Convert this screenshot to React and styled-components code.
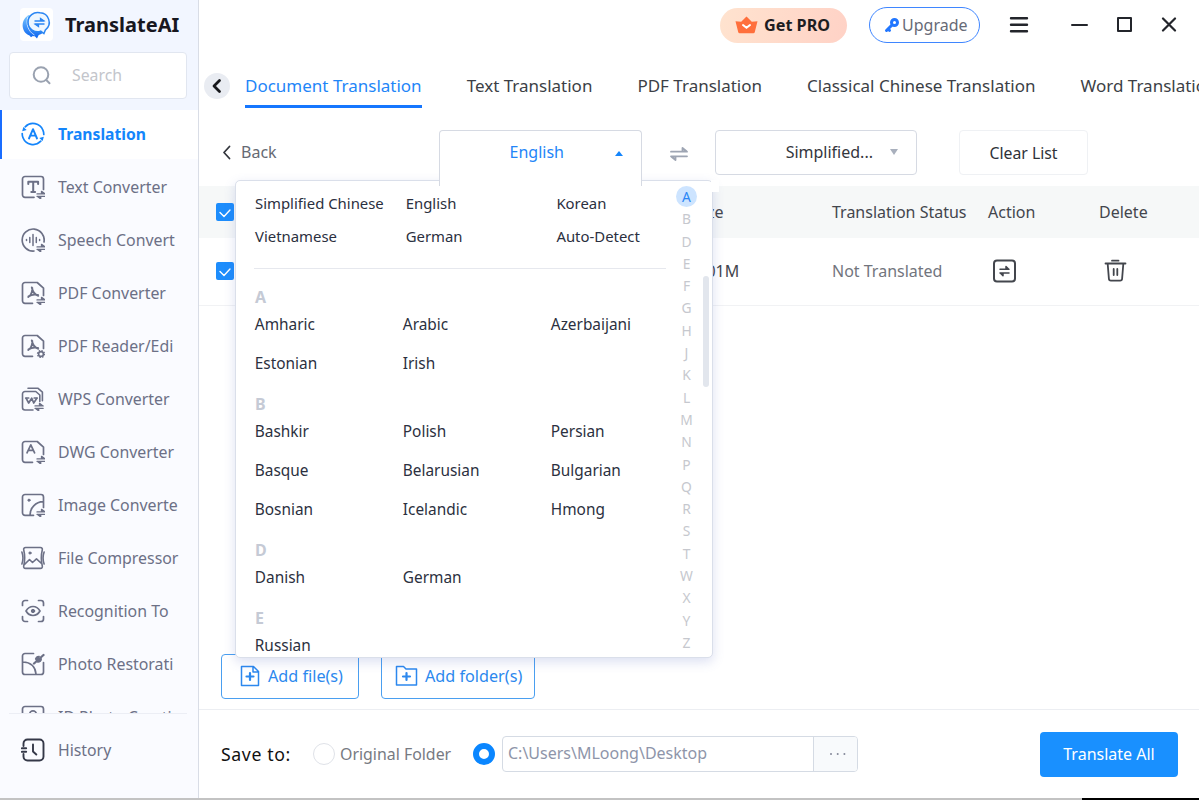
import styled, { createGlobalStyle } from "styled-components";

const GlobalStyle = createGlobalStyle`
  * {
    box-sizing: border-box;
  }

  body {
    margin: 0;
    overflow: hidden;
    background-color: #fff;
    color: #333;
    font-family: "Noto Sans", "Open Sans", sans-serif;
    font-size: 16px;
  }

  button {
    font: inherit;
    padding: 0;
    border: none;
    background: none;
    white-space: nowrap;
  }

  svg {
    display: block;
    flex: none;
  }
`;

const StyledWindow = styled.div`
  display: flex;
  flex-direction: column;
  width: 1199px;
  height: 800px;
  overflow: hidden;
`;

const StyledBody = styled.div`
  display: flex;
  height: 798px;
`;

const StyledBottomEdge = styled.div`
  display: flex;
  justify-content: flex-end;
  height: 2px;
  background-color: #c3c3c3;
`;

const StyledBottomMark = styled.div`
  width: 117px;
  background-color: #000;
`;

/* Sidebar */

const StyledSidebar = styled.aside`
  display: flex;
  flex-direction: column;
  width: 199px;
  flex: none;
  background-color: #fafbff;
  border-right: 1px solid #d9dde6;
`;

const StyledSidebarTop = styled.div`
  height: 110px;
  padding: 8px 10px 0 9px;
  background-color: #f2f6ff;
`;

const StyledBrand = styled.div`
  display: flex;
  align-items: center;
  gap: 12px;
  height: 33px;
  padding-left: 11px;
  color: #17171f;
  font-size: 20px;
  font-weight: 700;
`;

const StyledSearch = styled.label`
  display: flex;
  align-items: center;
  gap: 21px;
  width: 178px;
  height: 47px;
  margin-top: 11px;
  padding: 0 0 2px 22px;
  border: 1px solid #e1e6f0;
  border-radius: 4px;
  background-color: #fff;
  color: #c3c5cb;
  font-size: 15.8px;
`;

const StyledNav = styled.ul`
  height: 603px;
  margin: 0;
  padding: 0;
  overflow: hidden;
  list-style: none;
`;

const StyledNavItem = styled.li`
  display: flex;
  align-items: center;
  gap: 13px;
  height: ${({ $isActive }) => ($isActive ? "49px" : "53.05px")};
  margin-bottom: ${({ $isActive }) => ($isActive ? "2px" : "0")};
  padding-bottom: 1px;
  padding-left: ${({ $isActive }) => ($isActive ? "19px" : "21px")};
  border-left: ${({ $isActive }) => ($isActive ? "2px solid #1a6dff" : "none")};
  background-color: ${({ $isActive }) => ($isActive ? "#fff" : "transparent")};
  color: ${({ $isActive }) => ($isActive ? "#1485fb" : "#6c7086")};
  font-size: ${({ $isActive }) => ($isActive ? "15.7px" : "15.9px")};
  font-weight: ${({ $isActive }) => ($isActive ? 700 : 400)};
  white-space: nowrap;
`;

const StyledHistory = styled.div`
  display: flex;
  align-items: center;
  gap: 13px;
  height: 72px;
  margin: 0 11px 0 9px;
  padding-left: 12px;
  border-top: 1px solid #eceef5;
  color: #6c7086;
  font-size: 15.8px;

  svg {
    color: #343848;
  }
`;

/* Main */

const StyledMain = styled.main`
  display: flex;
  flex-direction: column;
  width: 1000px;
  overflow: hidden;
`;

const StyledTitleBar = styled.header`
  display: flex;
  align-items: center;
  justify-content: flex-end;
  height: 51px;
  padding: 0 22px 1px 0;
  color: #23252b;
`;

const StyledGetPro = styled.button`
  display: flex;
  align-items: center;
  gap: 6px;
  width: 127px;
  height: 35px;
  padding-left: 15px;
  border-radius: 18px;
  background: linear-gradient(100deg, #ffe3cf, #ffd2c6);
  color: #1d1d22;
  font-size: 16.2px;
  font-weight: 700;
`;

const StyledUpgrade = styled.button`
  display: flex;
  align-items: center;
  gap: 2px;
  width: 111px;
  height: 36px;
  margin: 0 29px 0 22px;
  padding-left: 14px;
  border: 1px solid #3f86ff;
  border-radius: 18px;
  background-color: #fff;
  color: #666a76;
  font-size: 16px;
`;

const StyledWindowButtons = styled.div`
  display: flex;
  align-items: center;
  gap: 28px;
  margin-left: 42px;
`;

const StyledTabs = styled.nav`
  display: flex;
  align-items: center;
  height: 72px;
  padding: 0 0 3px 5px;
`;

const StyledTabsBack = styled.button`
  display: grid;
  place-items: center;
  flex: none;
  width: 26px;
  height: 26px;
  margin-right: 15px;
  border-radius: 50%;
  background-color: #e9ecf2;
  color: #17181c;
`;

const StyledTab = styled.a`
  flex: none;
  height: 44px;
  margin-right: 45px;
  padding-top: 2px;
  border-bottom: 3px solid
    ${({ $isActive }) => ($isActive ? "#1677ff" : "transparent")};
  color: ${({ $isActive }) => ($isActive ? "#1f86f8" : "#3c3f46")};
  font-size: 17px;
  line-height: 40px;
  white-space: nowrap;
`;

const StyledToolbar = styled.div`
  position: relative;
  display: flex;
  align-items: flex-start;
  height: 63px;
  padding: 7px 0 0 23px;
`;

const StyledBack = styled.button`
  display: flex;
  align-items: center;
  gap: 10px;
  width: 217px;
  height: 44px;
  color: #666a73;
`;

const StyledSelect = styled.button`
  position: relative;
  display: flex;
  align-items: center;
  justify-content: flex-end;
  gap: ${({ $isOpen }) => ($isOpen ? "51px" : "17px")};
  width: ${({ $isOpen }) => ($isOpen ? "203px" : "202px")};
  height: ${({ $isOpen }) => ($isOpen ? "56px" : "45px")};
  padding: ${({ $isOpen }) => ($isOpen ? "0 18px 13px 0" : "0 18px 2px 0")};
  border: 1px solid #d6dae3;
  border-bottom: ${({ $isOpen }) => ($isOpen ? "none" : "1px solid #d6dae3")};
  border-radius: ${({ $isOpen }) => ($isOpen ? "4px 4px 0 0" : "4px")};
  background-color: #fff;
  color: ${({ $isOpen }) => ($isOpen ? "#2385f8" : "#33363d")};
  z-index: ${({ $isOpen }) => ($isOpen ? 3 : 0)};
`;

const StyledCaret = styled.span`
  margin-top: ${({ $isUp }) => ($isUp ? "2px" : "1px")};
  border: 4px solid transparent;
  border-top-width: ${({ $isUp }) => ($isUp ? "0" : "6px")};
  border-bottom-width: ${({ $isUp }) => ($isUp ? "5px" : "0")};
  border-top-color: #a9b0bd;
  border-bottom-color: #1485fb;
`;

const StyledSwap = styled.button`
  display: grid;
  place-items: center;
  width: 73px;
  height: 48px;
  color: #9ea5b3;
`;

const StyledClear = styled.button`
  width: 129px;
  height: 45px;
  margin-left: 42px;
  border: 1px solid #eff1f4;
  border-radius: 4px;
  color: #2e3138;
  font-size: 15.8px;
`;

const StyledTableRow = styled.div`
  display: grid;
  grid-template-columns: 477px 139px 156px 111px 1fr;
  align-items: center;
  height: ${({ $isHead }) => ($isHead ? "52px" : "68px")};
  padding: ${({ $isHead }) => ($isHead ? "0 0 0 17px" : "0 0 1px 17px")};
  border-bottom: ${({ $isHead }) => ($isHead ? "none" : "1px solid #f1f2f4")};
  background-color: ${({ $isHead }) => ($isHead ? "#f6f8f8" : "#fff")};
  color: #43464d;
  font-size: 16px;
  white-space: nowrap;
`;

const StyledSizeHead = styled.span`
  padding-left: 1px;
`;

const StyledStatus = styled.span`
  color: #72757d;
`;

const StyledCheckbox = styled.span`
  display: grid;
  place-items: center;
  width: 18px;
  height: 18px;
  border-radius: 2px;
  background-color: #1d8dfc;
  color: #fff;
`;

const StyledAddButtons = styled.div`
  display: flex;
  gap: 22px;
  margin-top: auto;
  padding: 0 0 10px 22px;
  border-bottom: 1px solid #eceef2;
`;

const StyledAddButton = styled.button`
  display: flex;
  align-items: center;
  gap: ${({ $gap }) => $gap};
  width: ${({ $width }) => $width};
  height: 45px;
  padding: 0 0 1px ${({ $inset }) => $inset};
  border: 1px solid #4a9ff0;
  border-radius: 4px;
  color: #2c88ee;
  font-size: 16.2px;
`;

const StyledFooter = styled.footer`
  display: flex;
  align-items: center;
  height: 88px;
  padding: 0 21px 0 22px;
`;

const StyledSaveTo = styled.span`
  width: 92px;
  flex: none;
  color: #111;
  font-size: 17.7px;
  letter-spacing: 0.6px;
`;

const StyledRadio = styled.span`
  width: 22px;
  height: 22px;
  flex: none;
  border: ${({ $isChecked }) =>
    $isChecked ? "6.5px solid #0a86ff" : "1.5px solid #dfe2e8"};
  border-radius: 50%;
  background-color: #fff;
`;

const StyledRadioText = styled.span`
  width: 138px;
  flex: none;
  padding-left: 5px;
  color: #777a82;
  font-size: 15.9px;
  white-space: nowrap;
`;

const StyledPath = styled.div`
  display: flex;
  width: 356px;
  height: 36px;
  flex: none;
  margin-left: 7px;
  border: 1px solid #d5dbe4;
  border-radius: 4px;
  overflow: hidden;
`;

const StyledPathText = styled.span`
  width: 310px;
  padding-left: 5px;
  color: #8e95a9;
  line-height: 32px;
  font-size: 16px;
`;

const StyledBrowse = styled.button`
  flex: 1;
  display: grid;
  place-items: center;
  padding-left: 5px;
  border-left: 1px solid #d5dbe4;
  background-color: #f8fafc;
  color: #85899a;
`;

const StyledTranslateAll = styled.button`
  width: 138px;
  height: 45px;
  margin-left: auto;
  border-radius: 4px;
  background-color: #1990ff;
  color: #fff;
  font-size: 16px;
`;

/* Language menu */

const StyledMenu = styled.div`
  position: absolute;
  top: 57px;
  left: 36px;
  z-index: 2;
  display: flex;
  width: 478px;
  height: 478px;
  border: 1px solid #dadfea;
  border-radius: 5px;
  background-color: #fff;
  box-shadow: 0 4px 12px rgba(80, 100, 190, 0.2);
`;

/* covers the corner where the menu meets the toolbar */
const StyledMenuCorner = styled.span`
  position: absolute;
  top: -1px;
  right: -7px;
  width: 8px;
  height: 12px;
  background-color: #fff;
`;

const StyledLanguages = styled.div`
  width: 440px;
  height: 476px;
  padding: 6px 10px 0 18px;
  overflow: hidden;
  color: #2b3040;
  font-size: 15.4px;
`;

const StyledRecent = styled.div`
  display: grid;
  grid-template-columns: repeat(3, 150.7px);
  grid-auto-rows: 32.5px;
  align-items: center;
  height: 82px;
  padding-left: 1px;
  border-bottom: 1px solid #e6e8ee;
  font-size: 14.9px;
  white-space: nowrap;
`;

const StyledLetter = styled.h3`
  height: 15px;
  margin: 14px 0 0;
  padding-left: 1px;
  color: #c5cad5;
  font-size: 16px;
  font-weight: 700;
  line-height: 15px;

  &:first-child {
    margin-top: 21px;
  }
`;

const StyledGroup = styled.div`
  display: grid;
  grid-template-columns: repeat(3, 148px);
  grid-auto-rows: 39px;
  align-items: center;
  padding-left: 0.8px;
`;

const StyledIndex = styled.ol`
  width: 21px;
  margin: 0;
  padding: 5px 0 0;
  list-style: none;
  color: #c6c8ce;
  font-size: 13.8px;
  line-height: 21px;
  text-align: center;
`;

const StyledIndexItem = styled.li`
  height: 21px;
  margin-bottom: 1.3px;
  border-radius: 50%;
  background-color: ${({ $isActive }) =>
    $isActive ? "#cde4ff" : "transparent"};
  color: ${({ $isActive }) => ($isActive ? "#2b86f5" : "inherit")};
`;

const StyledScrollThumb = styled.span`
  width: 6px;
  height: 111px;
  margin: 95px 0 0 6px;
  border-radius: 3px;
  background-color: #e2e6ed;
`;

/* Icons */

function Icon({ children, size = 24, width = size, height = size, box, sw = 1.7 }) {
  return (
    <svg
      width={width}
      height={height}
      viewBox={box || `0 0 ${width} ${height}`}
      fill="none"
      stroke="currentColor"
      strokeWidth={sw}
      strokeLinecap="round"
      strokeLinejoin="round"
    >
      {children}
    </svg>
  );
}

const miniSwap = (
  <path
    d="M16 18.900h8.200M20.500 18.500v-2.200l3.200 2.400zM24.200 21.300h-8.200M19.700 21.700v2.200l-3.200-2.400z"
    strokeWidth="1.300"
    fill="currentColor"
  />
);

const cutPage =
  "M11.500 22.300H4a2.500 2.500 0 0 1-2.500-2.500V4A2.500 2.500 0 0 1 4 1.500h12.200l6.300 5.600v7.400";

const pdfMark = (
  <path
    d="M10.800 6.500c.8 4 3 7.300 6.500 8.300M11.300 7c0 3.500-1.500 7.500-4 9M7.500 15.300c3-1.700 6-2 9.500-1.300"
    strokeWidth="1.900"
  />
);

const icons = {
  translation: (
    <Icon sw={1.7}>
      <path d="M4.200 4.800A10.800 10.800 0 0 1 22 8.300M19.800 19.200A10.800 10.800 0 0 1 2 15.700M1.200 11.500c0 1.500.2 2.900.8 4.200M22.800 12.500c0-1.500-.2-2.900-.8-4.200" />
      <path
        d="M1.200 9.300l4.500-1.200-3.400-3zM22.800 14.700l-4.500 1.200 3.400 3z"
        fill="currentColor"
        stroke="none"
      />
      <path d="M8 16.500l4-9.300 4 9.300M9.300 13.600h5.400" strokeWidth="1.900" />
    </Icon>
  ),
  text: (
    <Icon>
      <path d="M13 22.300H4a2.500 2.500 0 0 1-2.500-2.500V4A2.500 2.500 0 0 1 4 1.500h16A2.500 2.500 0 0 1 22.500 4v10.500" />
      <path d="M7.300 9V6.800h9.800V9M12.200 7v9.800M10.300 17h3.800" strokeWidth="2" />
      {miniSwap}
    </Icon>
  ),
  speech: (
    <Icon>
      <path d="M13 23A11 11 0 1 1 23 14" />
      <path
        d="M5.500 11.600v.8M8.800 9.500v5M12 6.500v11M15.300 9.500v5M18.600 11.600v.8"
        strokeWidth="1.500"
      />
      {miniSwap}
    </Icon>
  ),
  pdf: (
    <Icon>
      <path d={cutPage} />
      {pdfMark}
      {miniSwap}
    </Icon>
  ),
  reader: (
    <Icon>
      <path d={cutPage} />
      {pdfMark}
      <circle cx="20" cy="20" r="2.400" strokeWidth="1.600" />
      <circle
        cx="20"
        cy="20"
        r="3.500"
        strokeWidth="1.300"
        strokeLinecap="butt"
        strokeDasharray="1.400 1.350"
      />
    </Icon>
  ),
  wps: (
    <Icon sw={1.6}>
      <path d="M12 23H4a2.500 2.500 0 0 1-2.500-2.500V7A2.500 2.500 0 0 1 4 4.500h10.800l4 3.500v6.500" />
      <path d="M7 1.200h9.800l4.600 3.900v8.700" />
      <path
        d="M5 11l2.700 5 3-4.800 2 4.800L16 11M4.700 11h3M13.200 11h3"
        strokeWidth="1.700"
      />
      <g transform="translate(-2 0)">{miniSwap}</g>
    </Icon>
  ),
  dwg: (
    <Icon>
      <path d={cutPage} />
      <path d="M6 12.800l3.800-8 3.800 8M7.300 10.300h5" />
      {miniSwap}
    </Icon>
  ),
  image: (
    <Icon>
      <path d="M12.500 22.300H4a2.500 2.500 0 0 1-2.500-2.500V4A2.500 2.500 0 0 1 4 1.500h16A2.500 2.500 0 0 1 22.500 4v10.500M9 22c0-7 5.500-13 13.300-13.300" />
      <circle cx="8" cy="7.200" r="1.100" fill="currentColor" strokeWidth="1" />
      {miniSwap}
    </Icon>
  ),
  compress: (
    <Icon sw={1.6}>
      <path d="M4.600 1.500h14.800c1.500 0 2.200 1 1.900 2.300-1.300 5.400-1.300 10.800 0 16.200.3 1.500-.4 2.400-1.900 2.400H4.600c-1.500 0-2.200-.9-1.900-2.400 1.300-5.400 1.300-10.800 0-16.200-.3-1.300.4-2.300 1.900-2.300zM3.500 18.500l5-5 3 3 4-3.600 5 4.600" />
      <path d="M.9 6c1.300 3.700 1.300 8.300 0 12M23.100 6c-1.300 3.700-1.300 8.300 0 12" />
      <circle cx="9" cy="7" r="1.100" fill="currentColor" strokeWidth="1" />
    </Icon>
  ),
  recognition: (
    <Icon>
      <path d="M1.500 6.500V4A2.500 2.500 0 0 1 4 1.500h2.500M17.500 1.500H20A2.500 2.500 0 0 1 22.500 4v2.500M22.500 17.500V20a2.500 2.500 0 0 1-2.500 2.500h-2.500M6.500 22.500H4A2.500 2.500 0 0 1 1.500 20v-2.500" />
      <path d="M5 12c3.500-6 10.500-6 14 0-3.500 6-10.500 6-14 0z" />
      <circle cx="12" cy="12" r="1.700" fill="currentColor" strokeWidth="1" />
    </Icon>
  ),
  restore: (
    <Icon>
      <path d="M12.500 1.500H4A2.500 2.500 0 0 0 1.500 4v16A2.500 2.500 0 0 0 4 22.500h16a2.500 2.500 0 0 0 2.500-2.500v-9.500M1.800 10c8 .3 12.500 5 13.200 12" />
      <path d="M13 11.500l9.500-8.500" strokeWidth="2.300" />
      <path
        d="M14.500 7c.6-1.800 2-2.800 3.800-2.600l-1.300 2 1.300 1.400 2.100-1.100c0 2-1.500 3.600-3.700 3.500z"
        fill="currentColor"
        strokeWidth="1.200"
      />
    </Icon>
  ),
  idPhoto: (
    <Icon>
      <rect x="1.500" y="1.500" width="21" height="21" rx="2.500" />
      <circle cx="12" cy="9.200" r="3.300" />
      <path d="M6 18.500c2-4.500 10-4.500 12 0" />
    </Icon>
  ),
  history: (
    <Icon sw={1.9}>
      <path d="M2.500 8V5.500a4 4 0 0 1 4-4h12a4 4 0 0 1 4 4v13a4 4 0 0 1-4 4h-12a4 4 0 0 1-4-4V16M.8 10.300h4.400M.8 13.800h4.400M12 6.500v7l3.300 3" />
    </Icon>
  ),
};

function Logo() {
  return (
    <svg width="33" height="33" viewBox="0 0 33 33">
      <defs>
        <linearGradient id="logoBack" x1="0" y1="0" x2="0" y2="1">
          <stop offset="0" stopColor="#7cc8ff" />
          <stop offset="1" stopColor="#0a63f0" />
        </linearGradient>
      </defs>
      <rect width="33" height="33" rx="4" fill="#fff" />
      <path
        d="M9 7C.5 11 .5 24 9.500 27.500l1.500 1.800 1.800-1.300c.7.200 1.300.2 2 .2l2.200 2.400 1.700-3.600c3-.8 4.200-2 5.200-4z"
        fill="url(#logoBack)"
      />
      <path
        d="M8 8.500c-2.500 7 0 15 6.500 18.500"
        fill="none"
        stroke="#fff"
        strokeWidth=".7"
      />
      <path
        d="M20 4.800a9.500 9.500 0 0 1 5.500 17l-1.600 3.700-3.200-2.300A9.600 9.600 0 1 1 20 4.800z"
        fill="#eef7ff"
        stroke="#2b86f3"
        strokeWidth="1.500"
      />
      <path
        d="M14.500 13h10M20.500 12.500v-2l3 2zM24.500 16h-10M18.500 16.500v2l-3-2z"
        fill="#2b86f3"
        stroke="#2b86f3"
        strokeWidth="1.300"
      />
    </svg>
  );
}

const navItems = [
  { icon: "translation", label: "Translation" },
  { icon: "text", label: "Text Converter" },
  { icon: "speech", label: "Speech Convert" },
  { icon: "pdf", label: "PDF Converter" },
  { icon: "reader", label: "PDF Reader/Edi" },
  { icon: "wps", label: "WPS Converter" },
  { icon: "dwg", label: "DWG Converter" },
  { icon: "image", label: "Image Converte" },
  { icon: "compress", label: "File Compressor" },
  { icon: "recognition", label: "Recognition To" },
  { icon: "restore", label: "Photo Restorati" },
  { icon: "idPhoto", label: "ID Photo Creati" },
];

const tabs = [
  "Document Translation",
  "Text Translation",
  "PDF Translation",
  "Classical Chinese Translation",
  "Word Translation",
];

const recentLanguages = [
  "Simplified Chinese",
  "English",
  "Korean",
  "Vietnamese",
  "German",
  "Auto-Detect",
];

const languageGroups = [
  {
    letter: "A",
    languages: ["Amharic", "Arabic", "Azerbaijani", "Estonian", "Irish"],
  },
  {
    letter: "B",
    languages: [
      "Bashkir",
      "Polish",
      "Persian",
      "Basque",
      "Belarusian",
      "Bulgarian",
      "Bosnian",
      "Icelandic",
      "Hmong",
    ],
  },
  { letter: "D", languages: ["Danish", "German"] },
  { letter: "E", languages: ["Russian"] },
];

const indexLetters = "ABDEFGHJKLMNPQRSTWXYZ".split("");

function Sidebar() {
  return (
    <StyledSidebar>
      <StyledSidebarTop>
        <StyledBrand>
          <Logo />
          TranslateAI
        </StyledBrand>
        <StyledSearch>
          <Icon width={19} height={20} sw={2}>
            <g stroke="#9aa2b0">
              <circle cx="9" cy="9.500" r="7.300" />
              <path d="M14.500 15.300l3 3" />
            </g>
          </Icon>
          Search
        </StyledSearch>
      </StyledSidebarTop>
      <StyledNav>
        {navItems.map(({ icon, label }) => (
          <StyledNavItem key={label} $isActive={icon === "translation"}>
            {icons[icon]}
            {label}
          </StyledNavItem>
        ))}
      </StyledNav>
      <StyledHistory>
        {icons.history}
        History
      </StyledHistory>
    </StyledSidebar>
  );
}

function TitleBar() {
  return (
    <StyledTitleBar>
      <StyledGetPro>
        <svg width="23" height="18" viewBox="0 0 23 18">
          <path
            d="M.5 5.200l5.700.6L11.500.6l5.300 5.200 5.700-.6-2.700 10.900a1.500 1.500 0 0 1-1.500 1.200H4.700a1.500 1.500 0 0 1-1.500-1.200z"
            fill="#ff6f3c"
          />
          <path
            d="M8 9l3.500 2.800L15 9"
            fill="none"
            stroke="#fff"
            strokeWidth="2"
            strokeLinecap="round"
          />
        </svg>
        Get PRO
      </StyledGetPro>
      <StyledUpgrade>
        <Icon width={16} height={16} sw={3}>
          <g stroke="#2277ff">
            <circle cx="10.500" cy="5.500" r="3" />
            <path d="M7.500 8.500L2.500 13.500M4.500 12.500l1 .8" />
          </g>
        </Icon>
        Upgrade
      </StyledUpgrade>
      <Icon width={20} height={18} sw={2.4}>
        <path d="M2 2.200h16M2 8.700h16M2 15.200h16" />
      </Icon>
      <StyledWindowButtons>
        <Icon width={17} height={16} sw={2}>
          <path d="M1 8h15" />
        </Icon>
        <Icon width={17} height={16} sw={2}>
          <path d="M2 1h13v13H2z" />
        </Icon>
        <Icon width={16} height={16} sw={2.2}>
          <path d="M2 1.500l12 12M14 1.500L2 13.500" />
        </Icon>
      </StyledWindowButtons>
    </StyledTitleBar>
  );
}

function LanguageMenu() {
  return (
    <StyledMenu>
      <StyledMenuCorner />
      <StyledLanguages>
        <StyledRecent>
          {recentLanguages.map((language) => (
            <span key={language}>{language}</span>
          ))}
        </StyledRecent>
        <div>
          {languageGroups.map(({ letter, languages }) => [
            <StyledLetter key={letter}>{letter}</StyledLetter>,
            <StyledGroup key={`${letter}-list`}>
              {languages.map((language) => (
                <span key={language}>{language}</span>
              ))}
            </StyledGroup>,
          ])}
        </div>
      </StyledLanguages>
      <StyledIndex>
        {indexLetters.map((letter) => (
          <StyledIndexItem key={letter} $isActive={letter === "A"}>
            {letter}
          </StyledIndexItem>
        ))}
      </StyledIndex>
      <StyledScrollThumb />
    </StyledMenu>
  );
}

function Toolbar() {
  return (
    <StyledToolbar>
      <StyledBack>
        <Icon width={9} height={16} sw={1.8}>
          <path d="M7.500 2.500L2 8.500l5.500 6" stroke="#33363d" />
        </Icon>
        Back
      </StyledBack>
      <StyledSelect $isOpen>
        English
        <StyledCaret $isUp />
      </StyledSelect>
      <StyledSwap>
        <Icon width={18} height={16} sw={1.8}>
          <path d="M1 5.700h16M12.500 5.300v-3.300l4 3.300zM17 10.300h-16M5.500 10.700v3.300l-4-3.300z" />
        </Icon>
      </StyledSwap>
      <StyledSelect>
        Simplified...
        <StyledCaret />
      </StyledSelect>
      <StyledClear>Clear List</StyledClear>
      <LanguageMenu />
    </StyledToolbar>
  );
}

function Checkbox() {
  return (
    <StyledCheckbox>
      <Icon width={14} height={12} sw={1.4}>
        <path d="M2 6.500l4 4 6-6.500" />
      </Icon>
    </StyledCheckbox>
  );
}

function FileTable() {
  return (
    <div>
      <StyledTableRow $isHead>
        <Checkbox />
        <StyledSizeHead>Size</StyledSizeHead>
        <span>Translation Status</span>
        <span>Action</span>
        <span>Delete</span>
      </StyledTableRow>
      <StyledTableRow>
        <Checkbox />
        <span>0.01M</span>
        <StyledStatus>Not Translated</StyledStatus>
        <Icon width={34} height={24} box="-4.500 0 34 24" sw={2}>
          <rect x="1.500" y="1.500" width="21" height="21" rx="3" />
          <path
            d="M7.500 10.300h9M13.500 10v-2.500l2.500 2.500zM16.500 13.900h-9M10.500 14.200v2.500l-2.500-2.500z"
            strokeWidth="1.500"
          />
        </Icon>
        <Icon width={34} height={24} box="-4.500 0 34 24" sw={1.8}>
          <path d="M2 4.500h20M8.500 1.700h6.500M4.200 5l1.200 14.800a2 2 0 0 0 2 1.900h9.200a2 2 0 0 0 2-1.900L19.800 5M10.200 10v6M13.800 10v6" />
        </Icon>
      </StyledTableRow>
    </div>
  );
}

function SaveBar() {
  return (
    <StyledFooter>
      <StyledSaveTo>Save to:</StyledSaveTo>
      <StyledRadio />
      <StyledRadioText>Original Folder</StyledRadioText>
      <StyledRadio $isChecked />
      <StyledPath>
        <StyledPathText>C:\Users\MLoong\Desktop</StyledPathText>
        <StyledBrowse>
          <Icon width={18} height={4} sw={2}>
            <path d="M2 2h.01M8.700 2h.01M15.400 2h.01" />
          </Icon>
        </StyledBrowse>
      </StyledPath>
      <StyledTranslateAll>Translate All</StyledTranslateAll>
    </StyledFooter>
  );
}

export default function App() {
  return (
    <>
      <GlobalStyle />
      <StyledWindow>
        <StyledBody>
          <Sidebar />
          <StyledMain>
            <TitleBar />
            <StyledTabs>
              <StyledTabsBack>
                <Icon width={12} height={16} sw={2.8}>
                  <path d="M8.500 2.500L3 8l5.500 5.500" />
                </Icon>
              </StyledTabsBack>
              {tabs.map((tab) => (
                <StyledTab key={tab} $isActive={tab === "Document Translation"}>
                  {tab}
                </StyledTab>
              ))}
            </StyledTabs>
            <Toolbar />
            <FileTable />
            <StyledAddButtons>
              <StyledAddButton $width="138px" $inset="18px" $gap="8px">
                <Icon width={20} height={22}>
                  <path
                    d="M1.500 1.500h12L18.500 6.500v14h-17zM13 2v5h5"
                    strokeWidth="1.500"
                  />
                  <path d="M10 8v7M6.500 11.500h7" strokeWidth="2.200" />
                </Icon>
                Add file(s)
              </StyledAddButton>
              <StyledAddButton $width="154px" $inset="13px" $gap="7px">
                <Icon width={23} height={22}>
                  <path d="M1.500 1.500h7l2.500 2.500h10.500v16h-20z" strokeWidth="1.500" />
                  <path d="M11.500 8v7M8 11.500h7" strokeWidth="2.200" />
                </Icon>
                Add folder(s)
              </StyledAddButton>
            </StyledAddButtons>
            <SaveBar />
          </StyledMain>
        </StyledBody>
        <StyledBottomEdge>
          <StyledBottomMark />
        </StyledBottomEdge>
      </StyledWindow>
    </>
  );
}
